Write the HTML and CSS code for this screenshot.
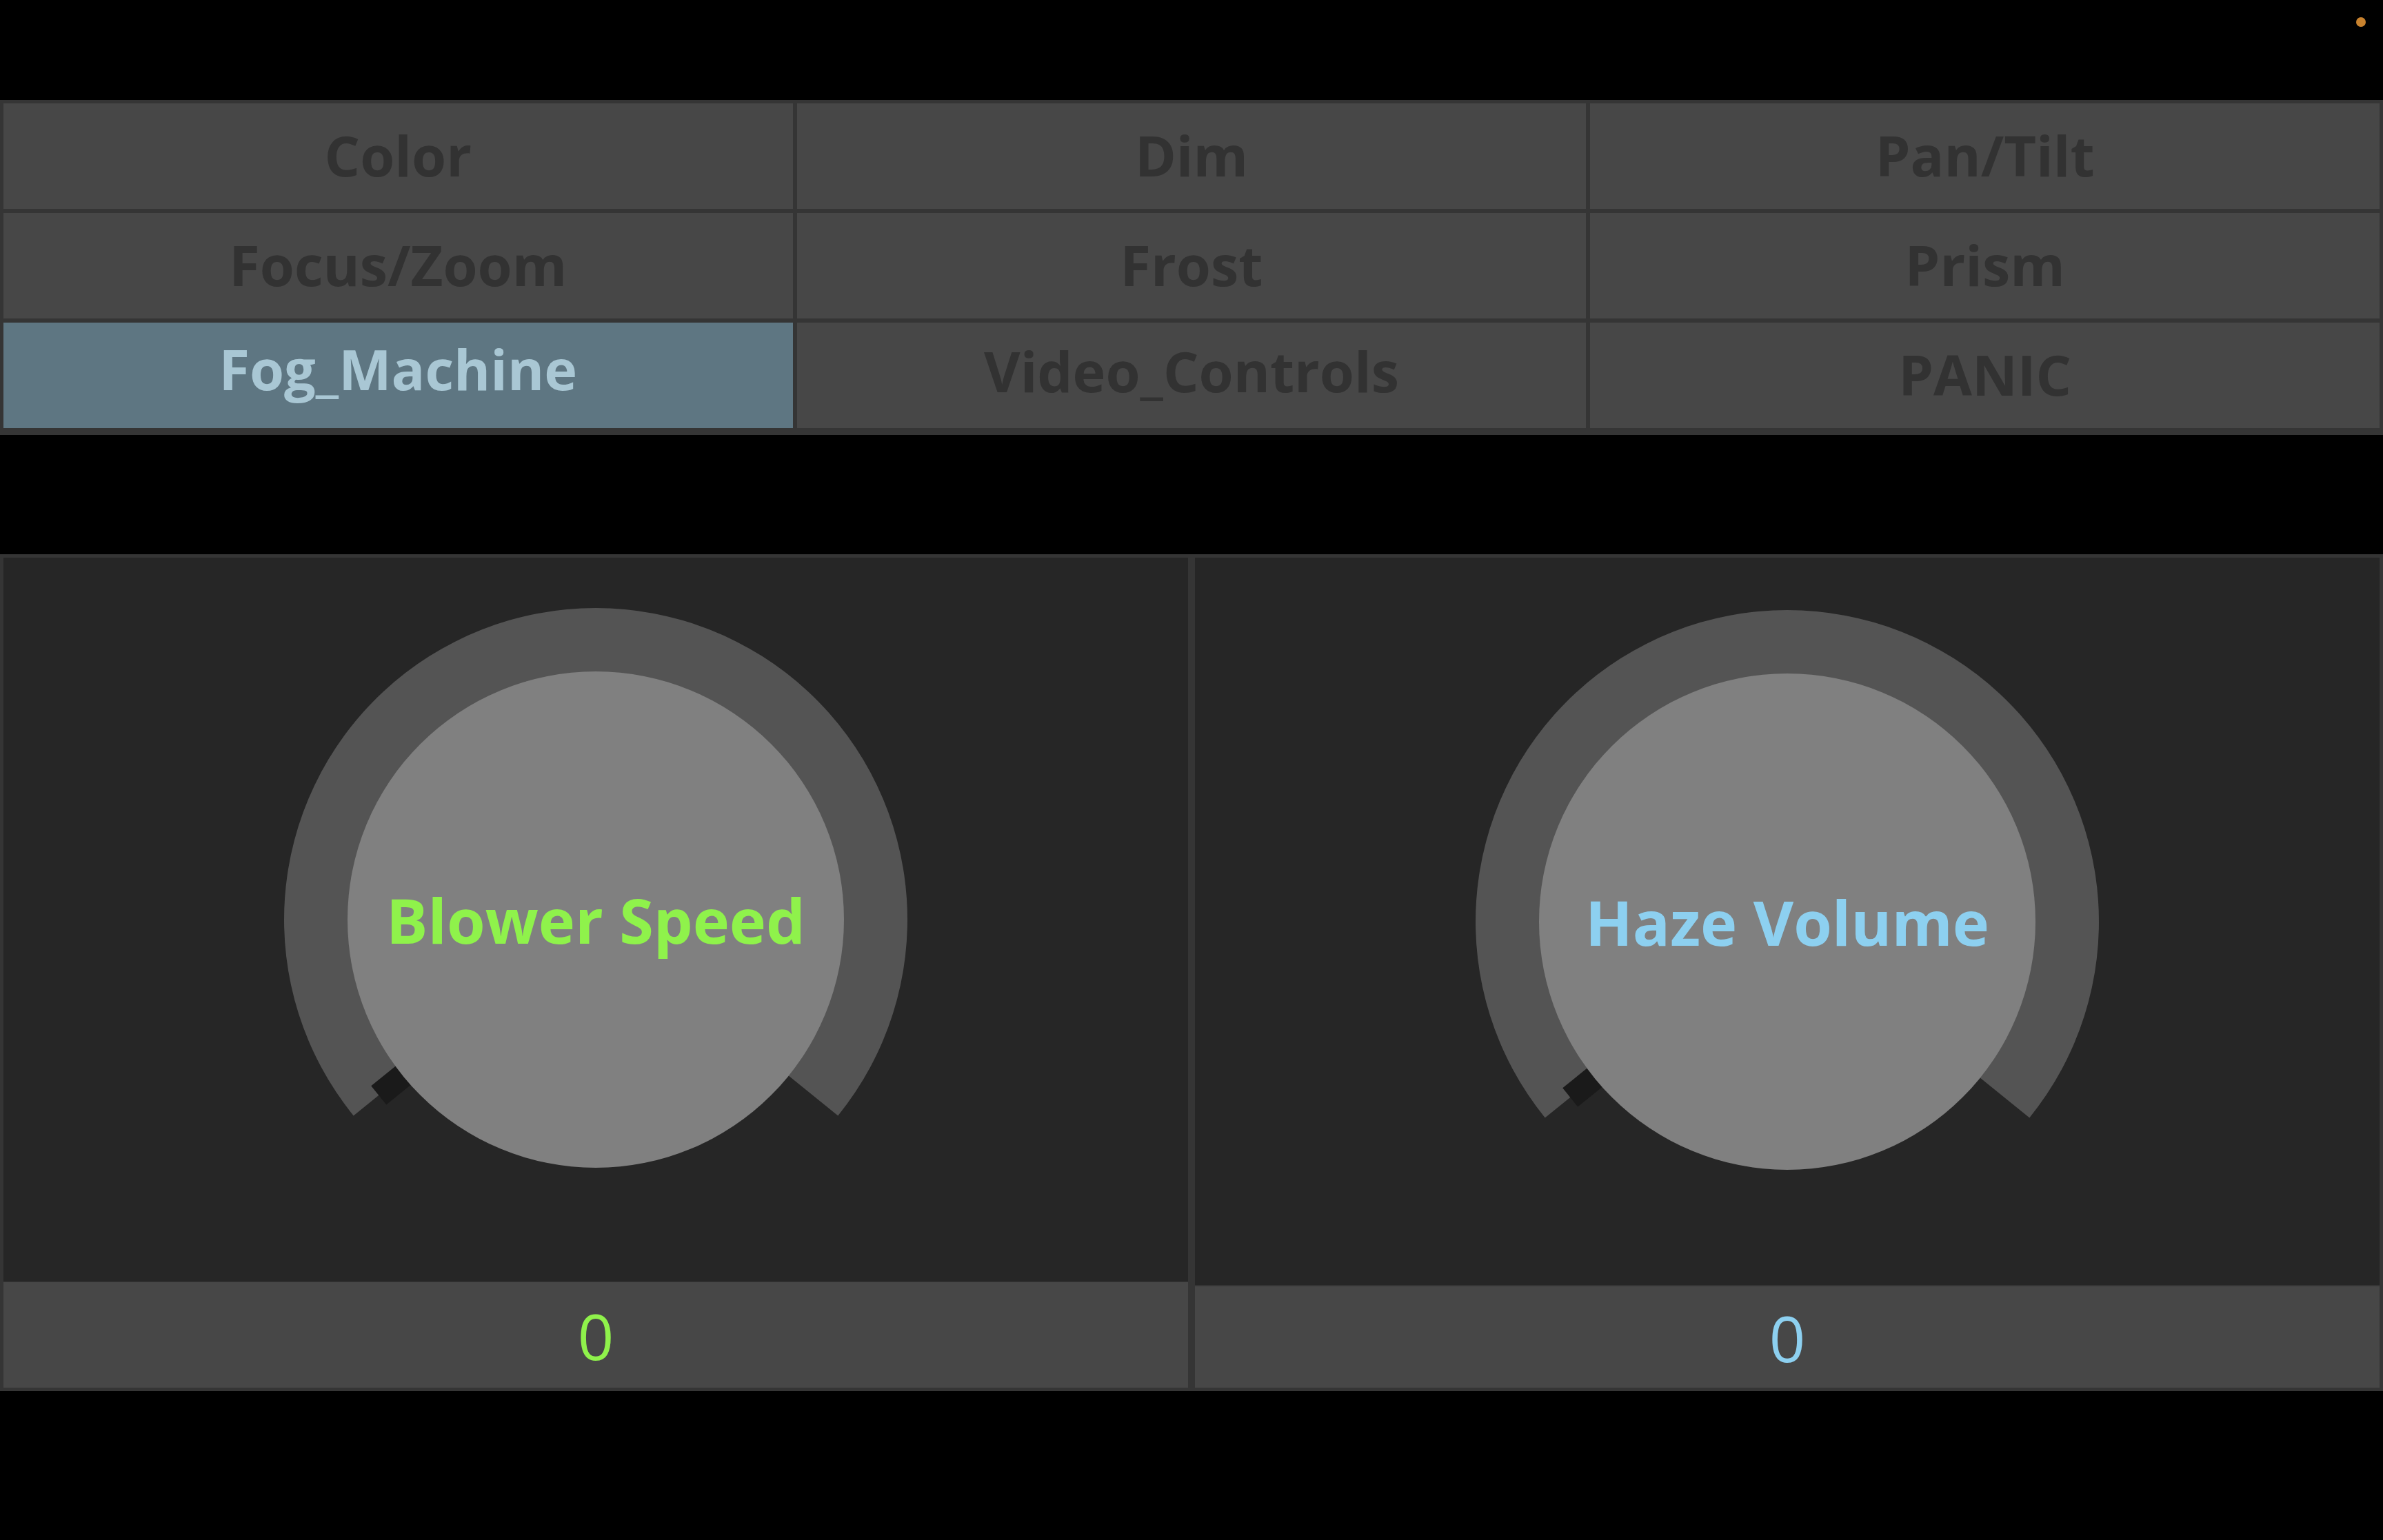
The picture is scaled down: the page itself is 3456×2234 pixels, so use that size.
FILE: index.html
```html
<!DOCTYPE html>
<html lang="en">
<head>
<meta charset="utf-8">
<title>Fog Machine</title>
<link rel="stylesheet" href="styles.css">
</head>
<body>
<header class="topbar">
  <span class="status-dot"></span>
</header>

<nav class="tabs">
  <div class="tab">Color</div>
  <div class="tab">Dim</div>
  <div class="tab">Pan/Tilt</div>
  <div class="tab">Focus/Zoom</div>
  <div class="tab">Frost</div>
  <div class="tab">Prism</div>
  <div class="tab tab-active tab-descender">Fog_Machine</div>
  <div class="tab tab-underscore">Video_Controls</div>
  <div class="tab">PANIC</div>
</nav>

<div class="spacer"></div>

<main class="panels">
  <section class="panel">
    <div class="knob-area">
      <div class="knob">
        <svg class="knob-svg" viewBox="-460 -460 920 920" width="920" height="920">
          <path class="ring" d="M 0 0 L -351.3 284.5 A 452 452 0 1 1 351.3 284.5 Z"/>
          <rect class="pip" x="318" y="-17.5" width="87" height="35" transform="rotate(141)"/>
          <circle class="face" cx="0" cy="0" r="360"/>
        </svg>
        <div class="knob-label label-green">Blower Speed</div>
      </div>
    </div>
    <div class="value-strip value-green">0</div>
  </section>
  <section class="panel panel-b">
    <div class="knob-area">
      <div class="knob">
        <svg class="knob-svg" viewBox="-460 -460 920 920" width="920" height="920">
          <path class="ring" d="M 0 0 L -351.3 284.5 A 452 452 0 1 1 351.3 284.5 Z"/>
          <rect class="pip" x="318" y="-17.5" width="87" height="35" transform="rotate(141)"/>
          <circle class="face" cx="0" cy="0" r="360"/>
        </svg>
        <div class="knob-label label-blue">Haze Volume</div>
      </div>
    </div>
    <div class="value-strip value-blue">0</div>
  </section>
</main>
</body>
</html>
```

FILE: styles.css
```css
* {
  box-sizing: border-box;
}

html, body {
  margin: 0;
  padding: 0;
  background: #000000;
}

body {
  font-family: "Open Sans", "Noto Sans", "Liberation Sans", sans-serif;
  width: 3456px;
  height: 2234px;
  overflow: hidden;
}

.topbar {
  position: relative;
  height: 145px;
}

.status-dot {
  position: absolute;
  top: 25px;
  right: 25px;
  width: 14px;
  height: 14px;
  border-radius: 50%;
  background: #c8822e;
}

.tabs {
  display: grid;
  grid-template-columns: repeat(3, 1fr);
  grid-template-rows: repeat(3, 153px);
  gap: 6px 6px;
  padding: 5px 5px 10px 5px;
  background: #353535;
}

.tab {
  display: flex;
  align-items: center;
  justify-content: center;
  padding-bottom: 5px;
  background: #474747;
  color: #323232;
  font-weight: 700;
  font-size: 81px;
  line-height: 1;
}

.tab-descender {
  padding-bottom: 20px;
}

.tab-underscore {
  padding-bottom: 14px;
}

.tab-active {
  background: #5e7682;
  color: #a9c7d4;
}

.spacer {
  height: 173px;
}

.panels {
  display: grid;
  grid-template-columns: 1fr 1fr;
  column-gap: 10px;
  padding: 5px;
  background: #353535;
}

.panel {
  display: flex;
  flex-direction: column;
  gap: 1px;
}

.knob-area {
  height: 1050px;
  background: #262626;
  display: flex;
  align-items: center;
  justify-content: center;
}

.panel-b {
  gap: 2px;
}

.panel-b .knob-area {
  height: 1055px;
}

.knob {
  display: grid;
  width: 920px;
  height: 920px;
}

.knob-svg,
.knob-label {
  grid-area: 1 / 1;
}

.knob-svg {
  display: block;
}

.ring {
  fill: #545454;
}

.pip {
  fill: #1a1a1a;
}

.face {
  fill: #808080;
}

.knob-label {
  display: flex;
  align-items: center;
  justify-content: center;
  font-weight: 700;
  font-size: 90px;
  line-height: 1;
}

.label-green {
  color: #8ff24b;
}

.label-blue {
  color: #8dd0f0;
}

.value-strip {
  height: 153px;
  background: #474747;
  display: flex;
  align-items: center;
  justify-content: center;
  padding-top: 3px;
  font-weight: 400;
  font-size: 92px;
  line-height: 1;
}

.panel-b .value-strip {
  height: 147px;
}

.value-green {
  color: #8ff24b;
}

.value-blue {
  color: #8dd0f0;
}
```
